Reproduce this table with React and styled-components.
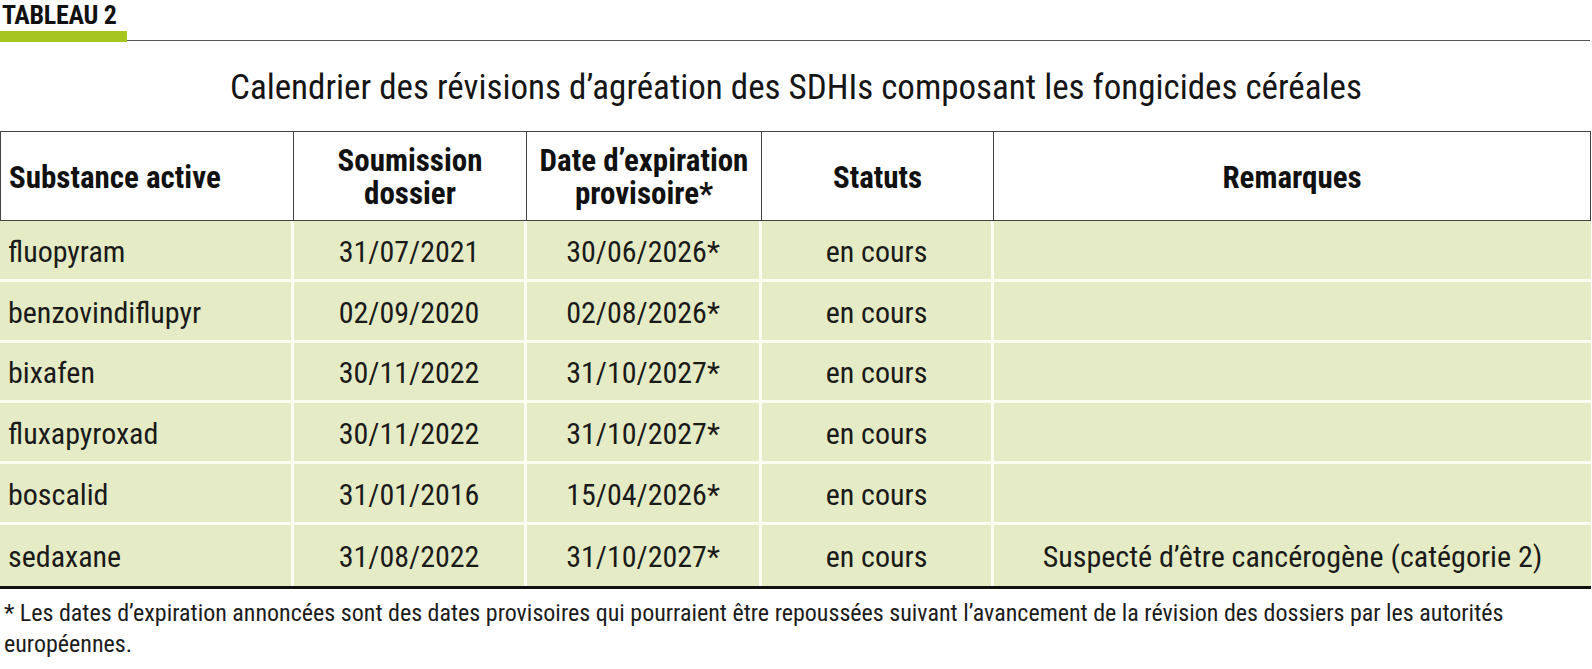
import React from "react";
import styled, { createGlobalStyle } from "styled-components";

const GlobalStyle = createGlobalStyle`
  html, body {
    margin: 0;
    padding: 0;
    background: #ffffff;
  }
  body {
    font-family: "Roboto Condensed", "Liberation Sans Narrow", "DejaVu Sans Condensed", Roboto, sans-serif;
    color: #1c1c1c;
  }
`;

const Page = styled.div`
  width: 1592px;
  height: 669px;
  overflow: hidden;
`;

const Label = styled.div`
  padding: 1px 0 0 2px;
  height: 29px;
  font-size: 26px;
  line-height: 28px;
  font-weight: 700;
  letter-spacing: -0.3px;
  color: #111;
`;

const Rule = styled.div`
  display: flex;
  align-items: flex-end;
  height: 12px;
  padding-right: 2px;
`;

const Accent = styled.div`
  width: 127px;
  height: 11px;
  background: #a6c61f;
`;

const Line = styled.div`
  flex: 1;
  height: 1.5px;
  background: #555;
  margin-bottom: 1px;
`;

const Title = styled.h1`
  margin: 24px 0 21px;
  text-align: center;
  font-size: 35px;
  line-height: 44px;
  font-weight: 400;
  color: #151515;
`;

const Grid = styled.div`
  display: grid;
  grid-template-columns: 294px 233px 235px 232px 1fr;
  width: 1591px;
`;

const HeadCell = styled.div`
  height: 90px;
  box-sizing: border-box;
  display: flex;
  align-items: center;
  justify-content: ${(p) => (p.$left ? "flex-start" : "center")};
  text-align: ${(p) => (p.$left ? "left" : "center")};
  white-space: pre-line;
  padding: 2px 8px 0;
  font-size: 31px;
  line-height: 33px;
  font-weight: 700;
  color: #111;
  border-top: 1.5px solid #444;
  border-bottom: 1.5px solid #444;
  border-right: 1.5px solid #444;
  border-left: ${(p) => (p.$left ? "1.5px solid #444" : "none")};
`;

const Cell = styled.div`
  height: 60.8px;
  box-sizing: border-box;
  display: flex;
  align-items: center;
  justify-content: ${(p) => (p.$left ? "flex-start" : "center")};
  padding: 3px 8px 0;
  background: #e5ebc5;
  font-size: 30px;
  color: #1a1a1a;
  border-right: ${(p) => (p.$last ? "none" : "3px solid #fbfdf3")};
  border-bottom: ${(p) => (p.$bottom ? "none" : "3px solid #fbfdf3")};
`;

const BottomLine = styled.div`
  width: 1591px;
  height: 3px;
  background: #111;
`;

const Note = styled.p`
  margin: 9px 0 0 4px;
  width: 1540px;
  font-size: 24px;
  line-height: 31px;
  color: #1c1c1c;
`;

const headers = [
  "Substance active",
  "Soumission\ndossier",
  "Date d’expiration\nprovisoire*",
  "Statuts",
  "Remarques",
];

const rows = [
  ["fluopyram", "31/07/2021", "30/06/2026*", "en cours", ""],
  ["benzovindiflupyr", "02/09/2020", "02/08/2026*", "en cours", ""],
  ["bixafen", "30/11/2022", "31/10/2027*", "en cours", ""],
  ["fluxapyroxad", "30/11/2022", "31/10/2027*", "en cours", ""],
  ["boscalid", "31/01/2016", "15/04/2026*", "en cours", ""],
  ["sedaxane", "31/08/2022", "31/10/2027*", "en cours", "Suspecté d’être cancérogène (catégorie 2)"],
];

const App = () => {
  return (
    <Page>
      <GlobalStyle />
      <Label>TABLEAU 2</Label>
      <Rule>
        <Accent />
        <Line />
      </Rule>
      <Title>Calendrier des révisions d’agréation des SDHIs composant les fongicides céréales</Title>
      <Grid>
        {headers.map((h, i) => (
          <HeadCell key={h} $left={i === 0}>
            {h}
          </HeadCell>
        ))}
        {rows.map((row, r) =>
          row.map((value, c) => (
            <Cell
              key={`${r}-${c}`}
              $left={c === 0}
              $last={c === row.length - 1}
              $bottom={r === rows.length - 1}
            >
              {value}
            </Cell>
          ))
        )}
      </Grid>
      <BottomLine />
      <Note>
        * Les dates d’expiration annoncées sont des dates provisoires qui pourraient être repoussées suivant
        l’avancement de la révision des dossiers par les autorités européennes.
      </Note>
    </Page>
  );
};

export default App;
